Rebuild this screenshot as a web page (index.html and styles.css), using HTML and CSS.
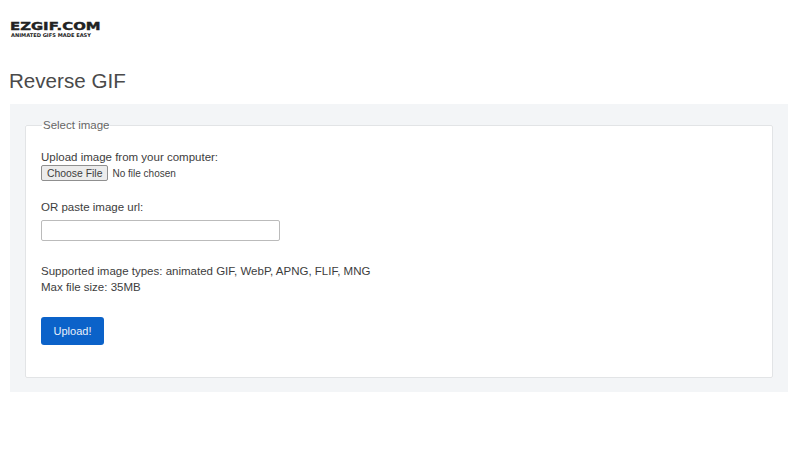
FILE: index.html
```html
<!DOCTYPE html>
<html lang="en">
<head>
<meta charset="utf-8">
<title>Reverse GIF</title>
<link rel="stylesheet" href="styles.css">
</head>
<body>
<header class="logo">
  <div class="logo-main">EZGIF.COM</div>
  <div class="logo-tag">ANIMATED GIFS MADE EASY</div>
</header>
<h1 class="title">Reverse GIF</h1>
<main class="panel">
  <form>
    <fieldset class="box">
      <legend class="legend">Select image</legend>
      <label class="label" for="file">Upload image from your computer:</label>
      <input class="file" id="file" type="file">
      <label class="label url-label" for="url">OR paste image url:</label>
      <input class="url" id="url" type="text">
      <p class="info">Supported image types: animated GIF, WebP, APNG, FLIF, MNG<br>Max file size: 35MB</p>
      <button class="upload" type="button">Upload!</button>
    </fieldset>
  </form>
</main>
</body>
</html>
```
FILE: styles.css
```css
* { box-sizing: border-box; }
html, body { margin: 0; background: #fff; }
body {
  width: 800px;
  height: 450px;
  overflow: hidden;
  padding: 20px 12px 0 10px;
  font-family: "Liberation Sans", Arial, sans-serif;
  font-size: 11.5px;
  color: #3d3d3d;
}
.logo { height: 17px; width: 90px; padding-top: 1px; color: #222; overflow: visible; }
.logo-main {
  font-family: "DejaVu Sans", sans-serif;
  font-weight: 700;
  font-size: 11px;
  line-height: 11px;
  width: 90px;
  white-space: nowrap;
  transform-origin: 0 0;
  transform: scaleX(1.35);
  -webkit-text-stroke: 0.4px #222;
}
.logo-tag {
  font-family: "DejaVu Sans", sans-serif;
  font-weight: 700;
  font-size: 5.1px;
  line-height: 5px;
  white-space: nowrap;
  margin: 1px 0 0 1px;
}
.title {
  margin: 31px 0 0 -1px;
  font-size: 20.6px;
  line-height: 26px;
  font-weight: 400;
  color: #4a4a4a;
}
.panel {
  margin-top: 10px;
  height: 288px;
  width: 778px;
  padding: 14px 15px;
  background: #f3f5f7;
}
.box {
  margin: 0;
  height: 260px;
  padding: 18px 15px 0;
  border: 1px solid #e2e4e6;
  border-radius: 2px;
  background: #fff;
}
.legend {
  margin-left: 1px;
  padding: 0 1px;
  font-size: 11.5px;
  line-height: 14px;
  color: #666;
}
.label { display: block; line-height: 14px; font-size: 11.5px; }
.file {
  display: block;
  height: 16px;
  margin-top: 1px;
  color: #3d3d3d;
  font: 10px "Liberation Sans", Arial, sans-serif;
}
.file::file-selector-button {
  height: 16px;
  padding: 0 5px;
  margin-right: 4px;
  border: 1px solid #8f8f8f;
  border-radius: 2px;
  background: #ececec;
  color: #3d3d3d;
  font-size: 10.4px;
}
.url-label { margin-top: 19px; }
.url {
  display: block;
  width: 239px;
  height: 21px;
  margin-top: 6px;
  border: 1px solid #bbb;
  border-radius: 2px;
  background: #fff;
}
.info { margin: 22px 0 0; line-height: 16px; }
.upload {
  display: block;
  margin-top: 22px;
  width: 63px;
  height: 28px;
  padding: 0;
  border: 0;
  border-radius: 3px;
  background: #0b62c9;
  color: #e8f0fb;
  font: 11px "Liberation Sans", Arial, sans-serif;
}
```
